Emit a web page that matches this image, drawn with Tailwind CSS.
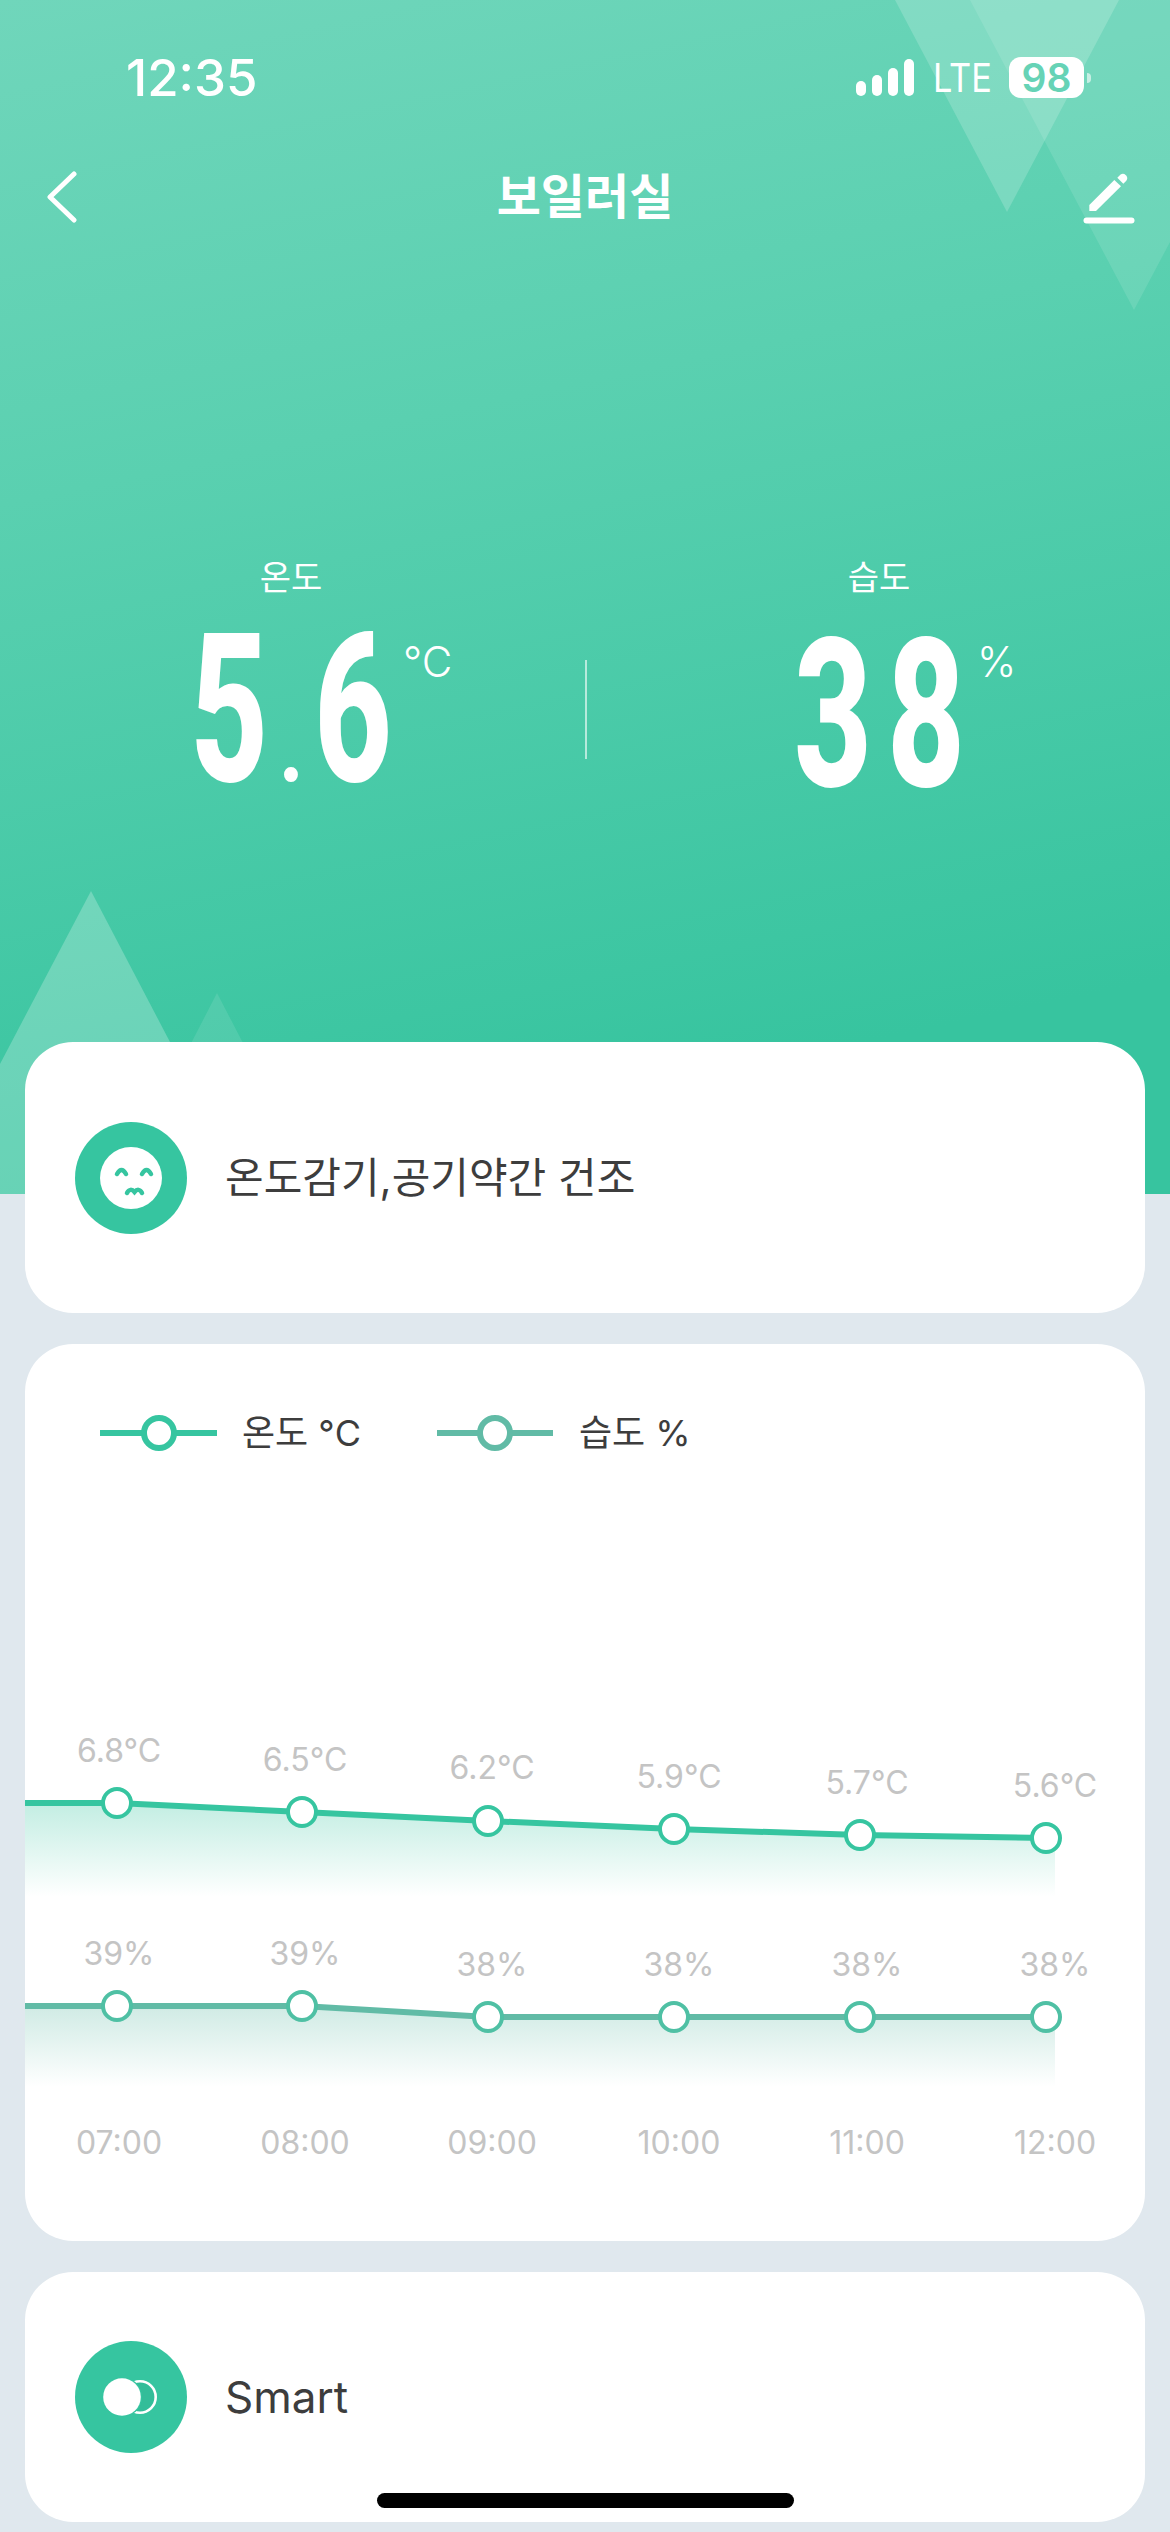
<!DOCTYPE html>
<html lang="ko">
<head>
  <meta charset="UTF-8" />
  <meta name="viewport" content="width=device-width, initial-scale=1.0" />
  <title>보일러실</title>
  <script src="https://cdn.jsdelivr.net/npm/@tailwindcss/browser@4"></script>
</head>
<body class="bg-[#e0e8ee] font-['Inter','Noto_Sans_CJK_KR',sans-serif] text-[#3d3d3d]">
  <div class="relative w-[1170px] h-[2532px] overflow-hidden">

    <!-- Header -->
    <header class="relative h-[1194px] overflow-hidden bg-[linear-gradient(168deg,#70d6bb_0%,#5ad0b0_35%,#37c49f_85%)] text-white">
      <!-- background triangles -->
      <svg class="absolute inset-0" width="1170" height="1194" viewBox="0 0 1170 1194">
        <polygon points="895,0 1119,0 1007,212" fill="#fff" fill-opacity=".18" />
        <polygon points="970,0 1298,0 1134,310" fill="#fff" fill-opacity=".11" />
        <polygon points="91,891 -240,1520 420,1520" fill="#fff" fill-opacity=".24" />
        <polygon points="217,993 100,1220 335,1220" fill="#fff" fill-opacity=".1" />
      </svg>

      <!-- Status bar -->
      <div class="relative flex items-center justify-between h-[41px] mt-[57px] pl-[126px] pr-[79px]">
        <span class="text-[51px] leading-none font-medium">12:35</span>
        <div class="flex items-center">
          <div class="flex items-end gap-[6px] h-[37px]">
            <i class="block w-[10px] h-[15px] rounded-full bg-white"></i>
            <i class="block w-[10px] h-[21px] rounded-full bg-white"></i>
            <i class="block w-[10px] h-[28px] rounded-full bg-white"></i>
            <i class="block w-[10px] h-[37px] rounded-full bg-white"></i>
          </div>
          <span class="ml-[19px] w-[58px] text-[39px] leading-none origin-left scale-x-[.88] whitespace-nowrap">LTE</span>
          <span class="ml-[18px] flex items-center justify-center w-[75px] h-[41px] rounded-[12px] bg-white text-[#66d3b6] text-[39px] leading-none font-semibold">98</span>
          <i class="block ml-[3px] w-[4px] h-[10px] rounded-r-full bg-white/60"></i>
        </div>
      </div>

      <!-- Nav -->
      <nav class="relative flex items-center justify-between h-[52px] mt-[73px] pl-[46px] pr-[34px]">
        <svg width="32" height="52" viewBox="0 0 32 52" fill="none" stroke="#fff" stroke-width="5" stroke-linecap="round" stroke-linejoin="round">
          <path d="M28 3 L4 26 L28 49" />
        </svg>
        <h1 class="absolute left-0 right-0 text-center text-[48px] leading-[52px] font-semibold">보일러실</h1>
        <svg class="overflow-visible" width="52" height="52" viewBox="0 0 52 52" fill="#fff">
          <path d="M5.3 34 L30.3 9 L37 15.3 L12 40 L5.3 40 Z" />
          <path d="M33.3 6.7 L36.3 3.7 A4.3 4.3 0 0 1 42.3 9.7 L39.3 12.7 Z" />
          <path d="M2.5 49.5 H47.5" fill="none" stroke="#fff" stroke-width="6" stroke-linecap="round" />
        </svg>
      </nav>

      <!-- Readings -->
      <div class="absolute left-[41px] top-[561px] flex">
        <div class="w-[500px] flex flex-col items-center">
          <span class="text-[34px] leading-[34px]">온도</span>
          <div class="relative mt-[45px] h-[150px] flex items-center justify-center">
            <span class="block font-['Roboto'] font-extrabold text-[208px] leading-[150px] scale-x-[.65] whitespace-nowrap">5<span class="inline-block mx-[21px] text-[96px] leading-none scale-x-[1.3]">.</span>6</span>
            <span class="absolute left-1/2 top-[1px] ml-[112px] text-[42px] leading-[42px] font-light">°C</span>
          </div>
        </div>
        <div class="w-[88px] flex justify-center pl-[2px] pt-[99px]">
          <i class="block w-[2px] h-[99px] bg-white/60"></i>
        </div>
        <div class="w-[500px] flex flex-col items-center">
          <span class="text-[34px] leading-[34px]">습도</span>
          <div class="relative mt-[45px] h-[150px] flex items-center justify-center">
            <span class="block pl-[23px] font-['Roboto'] font-extrabold text-[208px] leading-[150px] tracking-[23px] scale-x-[.65]">38</span>
            <span class="absolute left-1/2 top-[1px] ml-[98px] text-[42px] leading-[42px] font-light">%</span>
          </div>
        </div>
      </div>
    </header>

    <main class="absolute left-[25px] top-[1042px] w-[1120px] flex flex-col">
      <!-- Status card -->
      <section class="h-[271px] flex items-center gap-[38px] pl-[50px] rounded-[48px] bg-white">
        <div class="w-[112px] h-[112px] rounded-full bg-[#36c5a0] flex items-center justify-center">
          <svg width="62" height="62" viewBox="0 0 62 62">
            <circle cx="31" cy="31" r="31" fill="#fff" />
            <g fill="none" stroke="#36c5a0" stroke-width="4.5" stroke-linecap="round">
              <path d="M17 27 Q21.5 19 26 27" />
              <path d="M42 27 Q46.5 19 51 27" />
              <path d="M27 46 C29 42 32 42 34.5 45 C37 42 40 42 42 46" />
            </g>
          </svg>
        </div>
        <p class="text-[42px] leading-none">온도감기,공기약간 건조</p>
      </section>

      <!-- Chart card -->
      <section class="relative mt-[31px] h-[897px] rounded-[48px] bg-white overflow-hidden">
        <div class="flex items-center h-[40px] mt-[69px] pl-[75px] text-[36px] leading-none">
          <div class="relative w-[117px] h-[6px] bg-[#36c5a0]">
            <i class="absolute left-[41px] top-[-15px] block w-[36px] h-[36px] rounded-full border-[6px] border-[#36c5a0] bg-white"></i>
          </div>
          <span class="ml-[25px] w-[116px] whitespace-nowrap">온도 °C</span>
          <div class="relative ml-[79px] w-[116px] h-[6px] bg-[#61bba6]">
            <i class="absolute left-[40px] top-[-15px] block w-[36px] h-[36px] rounded-full border-[6px] border-[#61bba6] bg-white"></i>
          </div>
          <span class="ml-[26px] whitespace-nowrap">습도 %</span>
        </div>

        <!-- Chart: y origin is card top (1344), x origin is card left (25) -->
        <svg class="absolute left-0 top-0" width="1120" height="897" viewBox="0 0 1120 897">
          <defs>
            <linearGradient id="fillTemp" x1="0" y1="0" x2="0" y2="1">
              <stop offset="0" stop-color="#36c5a0" stop-opacity=".3" />
              <stop offset="1" stop-color="#36c5a0" stop-opacity="0" />
            </linearGradient>
            <linearGradient id="fillHum" x1="0" y1="0" x2="0" y2="1">
              <stop offset="0" stop-color="#61bba6" stop-opacity=".3" />
              <stop offset="1" stop-color="#61bba6" stop-opacity="0" />
            </linearGradient>
          </defs>

          <polygon points="0,459 92,459 277,468 463,477 649,485 835,491 1021,494 1030,494 1030,553 0,553" fill="url(#fillTemp)" />
          <polyline points="0,459 92,459 277,468 463,477 649,485 835,491 1021,494" fill="none" stroke="#36c5a0" stroke-width="6" />
          <g fill="#fff" stroke="#36c5a0" stroke-width="4">
            <circle cx="92" cy="459" r="14" />
            <circle cx="277" cy="468" r="14" />
            <circle cx="463" cy="477" r="14" />
            <circle cx="649" cy="485" r="14" />
            <circle cx="835" cy="491" r="14" />
            <circle cx="1021" cy="494" r="14" />
          </g>

          <polygon points="0,662 277,662 463,673 1021,673 1030,673 1030,743 0,743" fill="url(#fillHum)" />
          <polyline points="0,662 277,662 463,673 649,673 835,673 1021,673" fill="none" stroke="#61bba6" stroke-width="6" />
          <g fill="#fff" stroke="#4fc0a4" stroke-width="4">
            <circle cx="92" cy="662" r="14" />
            <circle cx="277" cy="662" r="14" />
            <circle cx="463" cy="673" r="14" />
            <circle cx="649" cy="673" r="14" />
            <circle cx="835" cy="673" r="14" />
            <circle cx="1021" cy="673" r="14" />
          </g>

          <g class="text-[32px]" fill="#c4c4c4" text-anchor="middle" dominant-baseline="central">
            <text x="94" y="406">6.8°C</text>
            <text x="280" y="415">6.5°C</text>
            <text x="467" y="423">6.2°C</text>
            <text x="654" y="432">5.9°C</text>
            <text x="842" y="438">5.7°C</text>
            <text x="1030" y="441">5.6°C</text>

            <text x="94" y="609">39%</text>
            <text x="280" y="609">39%</text>
            <text x="467" y="620">38%</text>
            <text x="654" y="620">38%</text>
            <text x="842" y="620">38%</text>
            <text x="1030" y="620">38%</text>

            <text x="94" y="798">07:00</text>
            <text x="280" y="798">08:00</text>
            <text x="467" y="798">09:00</text>
            <text x="654" y="798">10:00</text>
            <text x="842" y="798">11:00</text>
            <text x="1030" y="798">12:00</text>
          </g>
        </svg>
      </section>

      <!-- Smart card -->
      <section class="mt-[31px] h-[250px] flex items-center gap-[38px] pl-[50px] rounded-[48px] bg-white">
        <div class="w-[112px] h-[112px] rounded-full bg-[#36c5a0] flex items-center justify-center">
          <svg width="112" height="112" viewBox="0 0 112 112">
            <circle cx="65" cy="56" r="15.7" fill="#000" fill-opacity=".04" stroke="#fff" stroke-width="2.6" />
            <circle cx="47" cy="56" r="20" fill="#36c5a0" />
            <circle cx="47" cy="56" r="18.8" fill="#fff" />
          </svg>
        </div>
        <p class="text-[44px] leading-none">Smart</p>
      </section>
    </main>

    <!-- Home indicator -->
    <div class="absolute left-[377px] top-[2493px] w-[417px] h-[15px] rounded-full bg-black"></div>
  </div>
</body>
</html>
